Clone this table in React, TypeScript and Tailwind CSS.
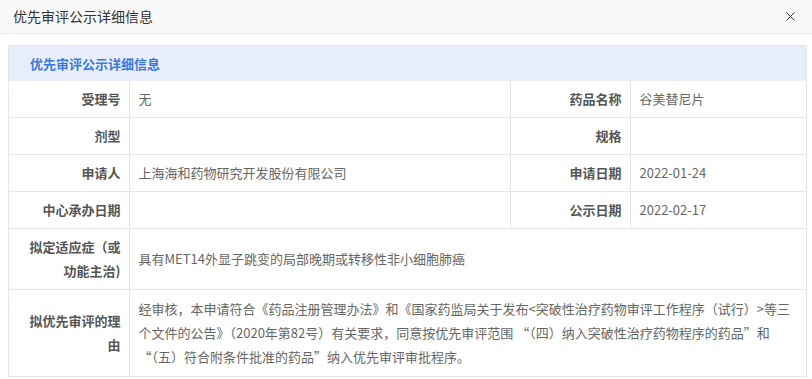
import { X } from "lucide-react"

const font = { fontFamily: '"Noto Sans CJK SC", "Noto Sans", sans-serif' }

function Label({ children }: { children: React.ReactNode }) {
  return (
    <td className="border border-[#e6e6e6] px-2 py-[6px] text-right align-middle font-bold text-[#555] leading-[24px]">
      {children}
    </td>
  )
}

function Value({ children, span }: { children?: React.ReactNode; span?: number }) {
  return (
    <td colSpan={span} className="border border-[#e6e6e6] px-[9px] py-[6px] align-middle text-[#666] leading-[24px]">
      {children}
    </td>
  )
}

export default function App() {
  return (
    <div className="w-[812px] h-[379px] bg-white text-[13px] overflow-hidden" style={font}>
      <div className="h-[34px] bg-[#f8f8f8] border-b border-[#ececec] flex items-center justify-between pl-[13px] pr-[14px]">
        <span className="text-[14px] text-[#333]">优先审评公示详细信息</span>
        <X size={15} strokeWidth={1.6} className="text-[#333]" />
      </div>
      <div className="ml-[8px] mt-[11px] w-[799px] border border-[#e6e6e6]">
        <div className="h-[35px] bg-[#e8eef9] flex items-center pl-[21px] font-bold text-[#3a78e0]">
          优先审评公示详细信息
        </div>
        <table className="w-full table-fixed border-collapse border-hidden">
          <colgroup>
            <col className="w-[120px]" />
            <col className="w-[381px]" />
            <col className="w-[120px]" />
            <col />
          </colgroup>
          <tbody>
            <tr className="h-[36px]">
              <Label>受理号</Label>
              <Value>无</Value>
              <Label>药品名称</Label>
              <Value>谷美替尼片</Value>
            </tr>
            <tr className="h-[36px]">
              <Label>剂型</Label>
              <Value />
              <Label>规格</Label>
              <Value />
            </tr>
            <tr className="h-[36px]">
              <Label>申请人</Label>
              <Value>上海海和药物研究开发股份有限公司</Value>
              <Label>申请日期</Label>
              <Value>2022-01-24</Value>
            </tr>
            <tr className="h-[36px]">
              <Label>中心承办日期</Label>
              <Value />
              <Label>公示日期</Label>
              <Value>2022-02-17</Value>
            </tr>
            <tr className="h-[61px]">
              <Label>拟定适应症（或功能主治)</Label>
              <Value span={3}>具有MET14外显子跳变的局部晚期或转移性非小细胞肺癌</Value>
            </tr>
            <tr className="h-[86px]">
              <Label>拟优先审评的理由</Label>
              <Value span={3}>
                经审核，本申请符合《药品注册管理办法》和《国家药监局关于发布&lt;突破性治疗药物审评工作程序（试行）&gt;等三个文件的公告》（2020年第82号）有关要求，同意按优先审评范围 “（四）纳入突破性治疗药物程序的药品”和 “（五）符合附条件批准的药品”纳入优先审评审批程序。
              </Value>
            </tr>
          </tbody>
        </table>
      </div>
    </div>
  )
}
